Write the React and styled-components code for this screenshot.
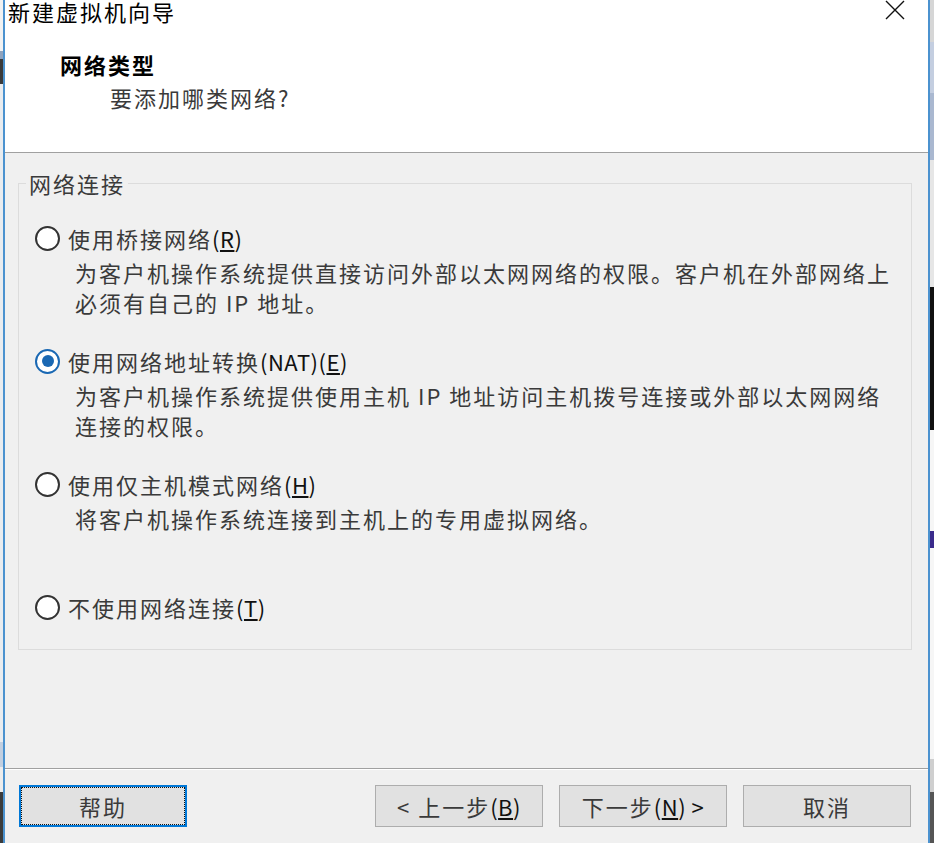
import React from 'react';
import styled, { createGlobalStyle } from 'styled-components';

const GlobalStyle = createGlobalStyle`
  html, body {
    margin: 0;
    padding: 0;
  }
  body {
    background: #f0f0f0;
    font-family: "Noto Sans CJK SC", "Liberation Sans", sans-serif;
  }
`;

const options = [
  {
    label: '使用桥接网络',
    hotkey: 'R',
    desc: [
      '为客户机操作系统提供直接访问外部以太网网络的权限。客户机在外部网络上',
      '必须有自己的 IP 地址。',
    ],
  },
  {
    label: '使用网络地址转换',
    latin: '(NAT)',
    hotkey: 'E',
    checked: true,
    desc: [
      '为客户机操作系统提供使用主机 IP 地址访问主机拨号连接或外部以太网网络',
      '连接的权限。',
    ],
  },
  {
    label: '使用仅主机模式网络',
    hotkey: 'H',
    desc: ['将客户机操作系统连接到主机上的专用虚拟网络。'],
  },
  {
    label: '不使用网络连接',
    hotkey: 'T',
    desc: [],
  },
];

const App = () => {
  return (
    <>
      <GlobalStyle />
      <Page>
        <LeftEdge />
        <Dialog>
          <TitleBar>
            <Title>新建虚拟机向导</Title>
            <CloseIcon viewBox="0 0 20 20">
              <path d="M1 1 L19 19 M19 1 L1 19" />
            </CloseIcon>
          </TitleBar>
          <Header>
            <HeaderTitle>网络类型</HeaderTitle>
            <HeaderSub>要添加哪类网络?</HeaderSub>
          </Header>
          <Body>
            <Group>
              <Legend>网络连接</Legend>
              <OptionList>
                {options.map((opt) => (
                  <Option key={opt.hotkey}>
                    <OptionRow>
                      <Radio checked={opt.checked} />
                      <OptionLabel>
                        {opt.label}
                        <Latin>
                          {opt.latin}(<u>{opt.hotkey}</u>)
                        </Latin>
                      </OptionLabel>
                    </OptionRow>
                    {opt.desc.length > 0 && (
                      <Desc>
                        {opt.desc.map((line) => (
                          <DescLine key={line}>{line}</DescLine>
                        ))}
                      </Desc>
                    )}
                  </Option>
                ))}
              </OptionList>
            </Group>
          </Body>
          <Footer>
            <Button focused>帮助</Button>
            <ButtonGroup>
              <Button>
                &lt; 上一步<Latin>(<u>B</u>)</Latin>
              </Button>
              <Button>
                下一步<Latin>(<u>N</u>) &gt;</Latin>
              </Button>
              <Button>取消</Button>
            </ButtonGroup>
          </Footer>
        </Dialog>
        <RightEdge />
      </Page>
    </>
  );
};

const Page = styled.div`
  display: flex;
  width: 934px;
  height: 843px;
  overflow: hidden;
`;

const LeftEdge = styled.div`
  width: 3px;
  background: linear-gradient(
    #f2f2f2 0 6%,
    #8fa3bd 6% 7%,
    #3a3a3a 7% 10%,
    #e9ecef 10% 88%,
    #c2cfe0 88% 91%,
    #ececec 91% 94%,
    #3b3b3b 94% 100%
  );
`;

const RightEdge = styled.div`
  width: 4px;
  background: linear-gradient(
    #d6d6d6 0 5%,
    #c4cee0 5% 11%,
    #aab8d0 11% 19%,
    #e6e6e6 19% 34%,
    #111 34% 51%,
    #f6f6f6 51% 63%,
    #3a2b8c 63% 65%,
    #f6f6f6 65% 90%,
    #cfcfcf 90% 94%,
    #555 94% 100%
  );
`;

const Dialog = styled.div`
  flex: 1;
  display: flex;
  flex-direction: column;
  border-left: 2px solid #4b92cf;
  border-right: 2px solid #4b92cf;
  background: #f0f0f0;
  min-width: 0;
`;

const TitleBar = styled.div`
  height: 30px;
  display: flex;
  justify-content: space-between;
  align-items: flex-start;
  padding: 0 23px 0 3px;
  background: #fff;
`;

const Title = styled.div`
  font-size: 22px;
  line-height: 23px;
  letter-spacing: 2px;
  color: #000;
`;

const CloseIcon = styled.svg`
  width: 20px;
  height: 20px;
  fill: none;
  stroke: #111;
  stroke-width: 1.4;
`;

const Header = styled.div`
  height: 103px;
  padding: 19px 0 0 55px;
  background: #fff;
  border-bottom: 1px solid #a0a0a0;
`;

const HeaderTitle = styled.div`
  font-size: 22px;
  line-height: 30px;
  font-weight: bold;
  letter-spacing: 2px;
  color: #000;
`;

const HeaderSub = styled.div`
  margin: 3px 0 0 50px;
  font-size: 22px;
  line-height: 30px;
  letter-spacing: 2px;
  color: #3a3a3a;
`;

const Body = styled.div`
  flex: 1;
  padding: 18px 16px 0 13px;
`;

const Group = styled.fieldset`
  margin: 0;
  padding: 0;
  min-width: 0;
  border: 1px solid #dcdcdc;
`;

const Legend = styled.legend`
  margin-left: 7px;
  padding: 0 3px;
  font-size: 22px;
  line-height: 24px;
  letter-spacing: 2px;
  color: #3a3a3a;
`;

const OptionList = styled.div`
  padding: 28px 0 27px 16px;
`;

const Option = styled.div`
  height: 123px;

  &:last-child {
    height: auto;
  }
`;

const OptionRow = styled.div`
  display: flex;
  align-items: center;
  height: 30px;
`;

const Radio = styled.span`
  position: relative;
  box-sizing: border-box;
  width: 25px;
  height: 25px;
  margin-right: 8px;
  border-radius: 50%;
  border: 2px solid ${(p) => (p.checked ? '#1a68b3' : '#333')};
  background: #fff;

  &::after {
    content: '';
    display: ${(p) => (p.checked ? 'block' : 'none')};
    position: absolute;
    left: 4.5px;
    top: 4.5px;
    width: 12px;
    height: 12px;
    border-radius: 50%;
    background: #1a68b3;
  }
`;

const OptionLabel = styled.span`
  font-size: 22px;
  line-height: 30px;
  letter-spacing: 2px;
  color: #3a3a3a;
  white-space: nowrap;
`;

const Latin = styled.span`
  letter-spacing: 0.5px;
  color: #111;
`;

const Desc = styled.div`
  margin-top: 4px;
  padding-left: 40px;
`;

const DescLine = styled.div`
  font-size: 22px;
  line-height: 30px;
  letter-spacing: 2px;
  color: #3a3a3a;
  white-space: nowrap;
`;

const Footer = styled.div`
  box-sizing: border-box;
  height: 75px;
  display: flex;
  justify-content: space-between;
  align-items: flex-start;
  padding: 16px 17px 0 14px;
  border-top: 1px solid #a0a0a0;
  box-shadow: inset 0 1px 0 #fff;
`;

const ButtonGroup = styled.div`
  display: flex;
  gap: 16px;
`;

const Button = styled.button`
  box-sizing: border-box;
  width: 168px;
  height: 42px;
  padding: 0;
  background: #e1e1e1;
  border: ${(p) => (p.focused ? '2px solid #0078d7' : '1px solid #adadad')};
  outline: ${(p) => (p.focused ? '1px dotted #111' : 'none')};
  outline-offset: -3px;
  font-family: "Noto Sans CJK SC", "Liberation Sans", sans-serif;
  font-size: 22px;
  line-height: 30px;
  letter-spacing: 2px;
  color: #3a3a3a;
  white-space: nowrap;
`;

export default App;
